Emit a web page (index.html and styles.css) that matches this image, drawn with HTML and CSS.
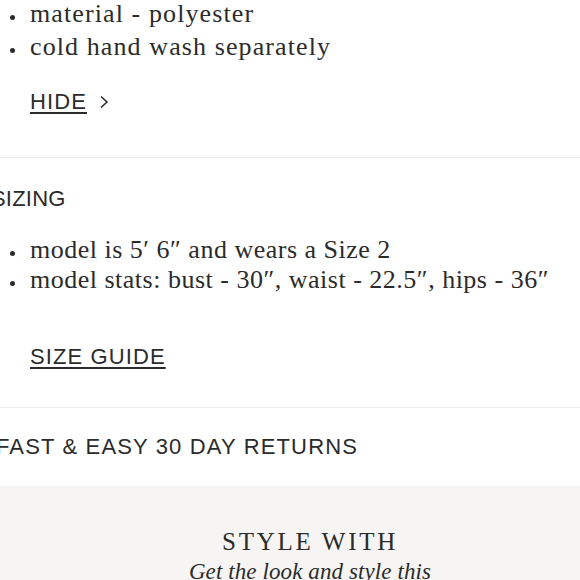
FILE: index.html
```html
<!DOCTYPE html>
<html lang="en">
<head>
<meta charset="utf-8">
<title>Product details</title>
<link rel="stylesheet" href="styles.css">
</head>
<body>
<div class="page">
  <section class="panel panel-details">
    <ul class="bullets bullets-details">
      <li>material - polyester</li>
      <li>cold hand wash separately</li>
    </ul>
    <a class="link link-hide" href="#">HIDE</a><svg class="chev" width="12" height="16" viewBox="0 0 12 16" aria-hidden="true"><path d="M3 2.5 L9 8 L3 13.5" fill="none" stroke="#2b2b2b" stroke-width="1.6"/></svg>
  </section>
  <section class="panel panel-sizing">
    <h2 class="heading heading-sizing">SIZING</h2>
    <ul class="bullets bullets-sizing">
      <li>model is 5′ 6″ and wears a Size 2</li>
      <li>model stats: bust - 30″, waist - 22.5″, hips - 36″</li>
    </ul>
    <a class="link link-guide" href="#">SIZE GUIDE</a>
  </section>
  <section class="panel panel-returns">
    <h2 class="heading">FAST &amp; EASY 30 DAY RETURNS</h2>
  </section>
  <section class="style-with">
    <h2 class="style-title">STYLE WITH</h2>
    <p class="style-sub">Get the look and style this</p>
  </section>
</div>
</body>
</html>
```
FILE: styles.css
```css
html, body {
  margin: 0;
  padding: 0;
  background: #fff;
  overflow: hidden;
}
.page {
  width: 580px;
  color: #2b2b2b;
}
.panel {
  border-bottom: 1px solid #ececec;
}
.panel-details {
  margin-top: -3px;
  padding-bottom: 42px;
}
.bullets {
  margin: 0;
  padding: 0 0 0 30px;
  font-family: "Liberation Serif", "DejaVu Serif", serif;
  font-size: 26px;
  letter-spacing: 1.1px;
  color: #2b2b2b;
}
.bullets-details li {
  line-height: 33px;
}
.bullets-sizing {
  letter-spacing: 0.5px;
}
.bullets-sizing li {
  line-height: 30px;
}
.bullets li {
  list-style: none;
  position: relative;
}
.bullets li::before {
  content: "";
  position: absolute;
  left: -20px;
  top: 50%;
  width: 5px;
  height: 5px;
  margin-top: 1px;
  border-radius: 50%;
  background: #2b2b2b;
}
.link {
  display: inline-block;
  margin-left: 30px;
  font-family: "Liberation Sans", Arial, sans-serif;
  font-size: 22px;
  letter-spacing: 1.1px;
  color: #2b2b2b;
  text-decoration: underline;
  text-decoration-thickness: 2px;
  text-underline-offset: 3px;
}
.link-hide {
  margin-top: 26px;
}
.chev {
  margin-left: 11px;
  vertical-align: -1px;
}
.heading {
  margin: 0;
  margin-left: -4px;
  font-family: "Liberation Sans", Arial, sans-serif;
  font-weight: 400;
  font-size: 22px;
  letter-spacing: 1.15px;
  line-height: 26px;
  color: #2b2b2b;
}
.heading-sizing {
  margin-left: -9px;
  letter-spacing: 0.2px;
}
.panel-sizing {
  padding-top: 28px;
  padding-bottom: 37px;
}
.bullets-sizing {
  margin-top: 23px;
}
.link-guide {
  margin-top: 49px;
}
.panel-returns {
  padding: 26px 0 26px;
  border-bottom: none;
}
.style-with {
  background: #f6f5f3;
  padding-top: 40px;
  padding-left: 40px;
  height: 200px;
  text-align: center;
}
.style-title {
  margin: 0;
  font-family: "Liberation Serif", serif;
  font-weight: 400;
  font-size: 25px;
  letter-spacing: 2.7px;
  line-height: 32px;
  color: #2b2b2b;
}
.style-sub {
  margin: 0;
  font-family: "Liberation Serif", serif;
  font-style: italic;
  font-size: 23px;
  line-height: 28px;
  letter-spacing: 0.1px;
  color: #2b2b2b;
}
```
